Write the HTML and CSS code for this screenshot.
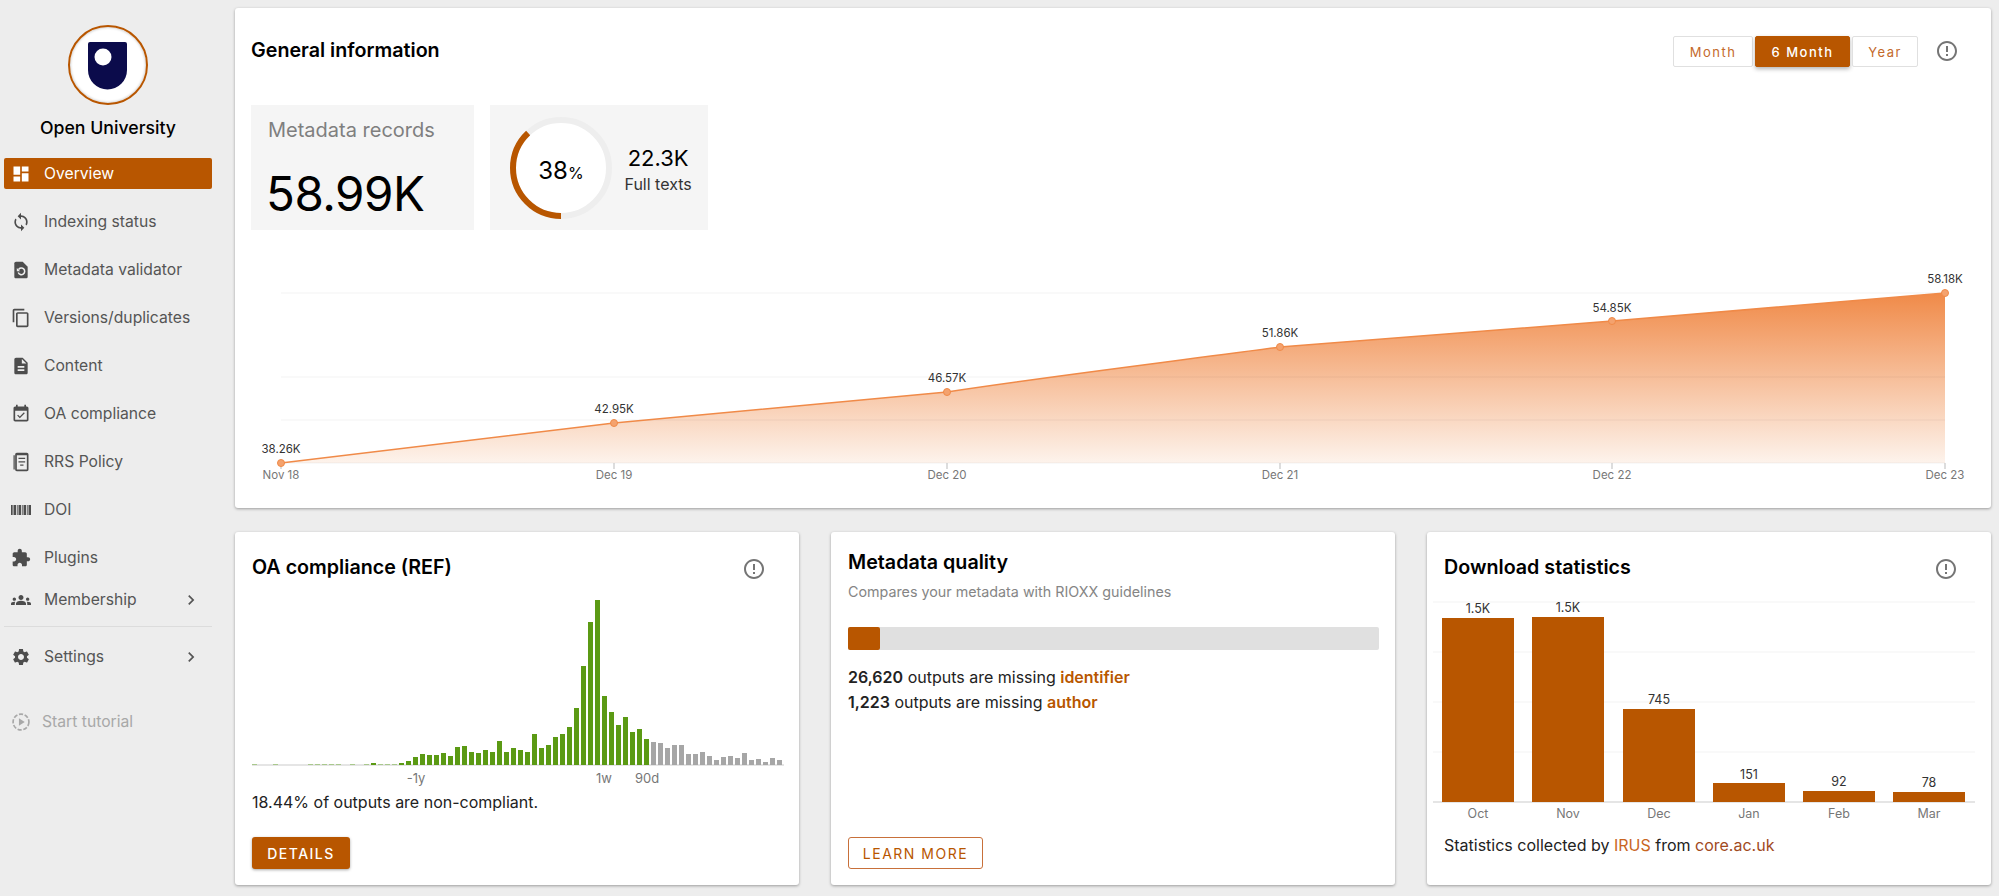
FILE: index.html
```html
<!DOCTYPE html>
<html lang="en">
<head>
<meta charset="utf-8">
<title>Open University - Overview</title>
<link rel="stylesheet" href="styles.css">
</head>
<body>
<div class="app">

  <aside class="sidebar">
    <div class="logo">
      <svg viewBox="0 0 76 76" width="76" height="76">
        <path class="logo-shield" d="M20 15h35a2 2 0 0 1 2 2v26a19.5 19.5 0 0 1-39 0V17a2 2 0 0 1 2-2z"/>
        <circle class="logo-dot" cx="33" cy="30" r="8.5"/>
      </svg>
    </div>
    <div class="org-name">Open University</div>

    <nav class="nav">
      <a class="nav-item active">
        <svg class="icon" viewBox="0 0 24 24"><path d="M3 13h8V3H3v10zm0 8h8v-6H3v6zm10 0h8V11h-8v10zm0-18v6h8V3h-8z"/></svg>
        Overview
      </a>
      <a class="nav-item">
        <svg class="icon" viewBox="0 0 24 24"><path d="M12 4V1L8 5l4 4V6c3.31 0 6 2.69 6 6 0 1.01-.25 1.97-.7 2.8l1.46 1.46C19.54 15.03 20 13.57 20 12c0-4.42-3.58-8-8-8zm0 14c-3.31 0-6-2.69-6-6 0-1.01.25-1.97.7-2.8L5.24 7.74C4.46 8.97 4 10.43 4 12c0 4.42 3.58 8 8 8v3l4-4-4-4v3z"/></svg>
        Indexing status
      </a>
      <a class="nav-item">
        <svg class="icon" viewBox="0 0 24 24"><path d="M14 2H6c-1.1 0-2 .9-2 2v16c0 1.1.9 2 2 2h12c1.1 0 2-.9 2-2V8l-6-6z"/><path class="icon-cut" d="M9 11.5a4 4 0 1 1-.3 3.5"/><path class="icon-cut-fill" d="M7 9.5v4h4z"/></svg>
        Metadata validator
      </a>
      <a class="nav-item">
        <svg class="icon" viewBox="0 0 24 24"><path d="M16 1H4c-1.1 0-2 .9-2 2v14h2V3h12V1zm3 4H8c-1.1 0-2 .9-2 2v14c0 1.1.9 2 2 2h11c1.1 0 2-.9 2-2V7c0-1.1-.9-2-2-2zm0 16H8V7h11v14z"/></svg>
        Versions/duplicates
      </a>
      <a class="nav-item">
        <svg class="icon" viewBox="0 0 24 24"><path d="M14 2H6c-1.1 0-1.99.9-1.99 2L4 20c0 1.1.89 2 1.99 2H18c1.1 0 2-.9 2-2V8l-6-6zm2 16H8v-2h8v2zm0-4H8v-2h8v2zm-3-5V3.5L18.5 9H13z"/></svg>
        Content
      </a>
      <a class="nav-item">
        <svg class="icon" viewBox="0 0 24 24"><path d="M16.53 11.06L15.47 10l-4.88 4.88-2.12-2.12-1.06 1.06L10.59 17l5.94-5.94zM19 3h-1V1h-2v2H8V1H6v2H5c-1.11 0-1.99.9-1.99 2L3 19c0 1.1.89 2 2 2h14c1.1 0 2-.9 2-2V5c0-1.1-.9-2-2-2zm0 16H5V8h14v11z"/></svg>
        OA compliance
      </a>
      <a class="nav-item">
        <svg class="icon" viewBox="0 0 24 24"><path d="M7 1h12c1.1 0 2 .9 2 2v18c0 1.1-.9 2-2 2H7c-1.1 0-2-.9-2-2V3c0-1.1.9-2 2-2zm0 3v17h12V4H7z"/><path d="M3 4h1.5v17H3zM9 7h8v1.5H9zm0 4h8v1.5H9zm2 4h4v1.5h-4z"/></svg>
        RRS Policy
      </a>
      <a class="nav-item">
        <svg class="icon" viewBox="0 0 24 24"><path d="M0 6h2v12H0zm3 0h3v12H3zm4 0h1v12H7zm2 0h3v12H9zm4 0h1v12h-1zm2 0h3v12h-3zm4 0h1v12h-1zm2 0h3v12h-3z"/></svg>
        DOI
      </a>
      <a class="nav-item">
        <svg class="icon" viewBox="0 0 24 24"><path d="M20.5 11H19V7c0-1.1-.9-2-2-2h-4V3.5C13 2.12 11.88 1 10.5 1S8 2.12 8 3.5V5H4c-1.1 0-1.99.9-1.99 2v3.8H3.5c1.49 0 2.7 1.21 2.7 2.7s-1.21 2.7-2.7 2.7H2V20c0 1.1.9 2 2 2h3.8v-1.5c0-1.49 1.21-2.7 2.7-2.7 1.49 0 2.7 1.21 2.7 2.7V22H17c1.1 0 2-.9 2-2v-4h1.5c1.38 0 2.5-1.12 2.5-2.5S21.88 11 20.5 11z"/></svg>
        Plugins
      </a>
      <a class="nav-item nav-membership">
        <svg class="icon" viewBox="0 0 24 24"><path d="M12 12.75c1.63 0 3.07.39 4.24.9 1.08.48 1.76 1.56 1.76 2.73V18H6v-1.61c0-1.18.68-2.26 1.76-2.73 1.17-.52 2.61-.91 4.24-.91zM4 13c1.1 0 2-.9 2-2s-.9-2-2-2-2 .9-2 2 .9 2 2 2zm1.13 1.1c-.37-.06-.74-.1-1.13-.1-.99 0-1.93.21-2.78.58C.48 14.9 0 15.62 0 16.43V18h4.5v-1.61c0-.83.23-1.61.63-2.29zM20 13c1.1 0 2-.9 2-2s-.9-2-2-2-2 .9-2 2 .9 2 2 2zm4 3.43c0-.81-.48-1.53-1.22-1.85-.85-.37-1.79-.58-2.78-.58-.39 0-.76.04-1.13.1.4.68.63 1.46.63 2.29V18H24v-1.57zM12 6c1.66 0 3 1.34 3 3s-1.34 3-3 3-3-1.34-3-3 1.34-3 3-3z"/></svg>
        Membership
        <svg class="icon chevron" viewBox="0 0 24 24"><path d="M10 6L8.59 7.41 13.17 12l-4.58 4.59L10 18l6-6z"/></svg>
      </a>
      <div class="nav-divider"></div>
      <a class="nav-item nav-settings">
        <svg class="icon" viewBox="0 0 24 24"><path d="M19.14 12.94c.04-.3.06-.61.06-.94 0-.32-.02-.64-.07-.94l2.03-1.58c.18-.14.23-.41.12-.61l-1.92-3.32c-.12-.22-.37-.29-.59-.22l-2.39.96c-.5-.38-1.03-.7-1.62-.94l-.36-2.54c-.04-.24-.24-.41-.48-.41h-3.84c-.24 0-.43.17-.47.41l-.36 2.54c-.59.24-1.13.57-1.62.94l-2.39-.96c-.22-.08-.47 0-.59.22L2.74 8.87c-.12.21-.08.47.12.61l2.03 1.58c-.05.3-.09.63-.09.94s.02.64.07.94l-2.03 1.58c-.18.14-.23.41-.12.61l1.92 3.32c.12.22.37.29.59.22l2.39-.96c.5.38 1.03.7 1.62.94l.36 2.54c.05.24.24.41.48.41h3.84c.24 0 .44-.17.47-.41l.36-2.54c.59-.24 1.13-.56 1.62-.94l2.39.96c.22.08.47 0 .59-.22l1.92-3.32c.12-.22.07-.47-.12-.61l-2.01-1.58zM12 15.6c-1.98 0-3.6-1.62-3.6-3.6s1.62-3.6 3.6-3.6 3.6 1.62 3.6 3.6-1.62 3.6-3.6 3.6z"/></svg>
        Settings
        <svg class="icon chevron" viewBox="0 0 24 24"><path d="M10 6L8.59 7.41 13.17 12l-4.58 4.59L10 18l6-6z"/></svg>
      </a>
      <a class="nav-item nav-tutorial">
        <svg class="icon" viewBox="0 0 24 24"><circle class="icon-dashed" cx="12" cy="12" r="9.5"/><path d="M9.5 7.5l7 4.500-7 4.500z"/></svg>
        Start tutorial
      </a>
    </nav>
  </aside>

  <main class="main">

    <section class="card card-general">
      <div class="general-head">
        <h2 class="card-title">General information</h2>
        <div class="period">
          <button class="period-btn btn-month">Month</button>
          <button class="period-btn btn-six active">6 Month</button>
          <button class="period-btn btn-year">Year</button>
        </div>
        <svg class="info" viewBox="0 0 24 24"><path d="M11 15h2v2h-2zm0-8h2v6h-2zm.99-5C6.47 2 2 6.48 2 12s4.47 10 9.99 10C17.52 22 22 17.52 22 12S17.52 2 11.99 2zM12 20c-4.42 0-8-3.58-8-8s3.58-8 8-8 8 3.58 8 8-3.58 8-8 8z"/></svg>
      </div>

      <div class="tiles">
        <div class="tile tile-records">
          <div class="tile-label">Metadata records</div>
          <div class="tile-value">58.99K</div>
        </div>
        <div class="tile tile-fulltext">
          <svg class="donut" viewBox="0 0 102 102" width="102" height="102">
            <circle class="donut-track" cx="51" cy="51" r="48"/>
            <circle class="donut-value" cx="51" cy="51" r="48" pathLength="100" transform="rotate(90 51 51)"/>
            <text class="donut-text" x="51" y="62" text-anchor="middle">38<tspan class="donut-pct">%</tspan></text>
          </svg>
          <div class="fulltext-info">
            <div class="fulltext-value">22.3K</div>
            <div class="fulltext-label">Full texts</div>
          </div>
        </div>
      </div>

      <!-- viewBox uses page coordinates so the points are easy to read off -->
      <svg class="area-chart" viewBox="235 230 1756 278">
        <defs>
          <linearGradient id="areaFill" x1="0" y1="0" x2="0" y2="1">
            <stop offset="0" stop-color="#f08a48"/>
            <stop offset="1" stop-color="#fdf3ec"/>
          </linearGradient>
        </defs>
        <path class="area" d="M281 463L614 423L947 392C1060 375 1170 362 1280 347L1612 321L1945 293V463z"/>
        <path class="grid" d="M281 293H1945M281 377H1945M281 420H1945M281 463H1945"/>
        <path class="tick" d="M281 463v6M614 463v6M947 463v6M1280 463v6M1612 463v6M1945 463v6"/>
        <path class="line" d="M281 463L614 423L947 392C1060 375 1170 362 1280 347L1612 321L1945 293"/>
        <g class="dots">
          <circle cx="281" cy="463" r="3.5"/>
          <circle cx="614" cy="423" r="3.5"/>
          <circle cx="947" cy="392" r="3.5"/>
          <circle cx="1280" cy="347" r="3.5"/>
          <circle cx="1612" cy="321" r="3.5"/>
          <circle cx="1945" cy="293" r="3.5"/>
        </g>
        <g class="point-label">
          <text x="281" y="453">38.26K</text>
          <text x="614" y="413">42.95K</text>
          <text x="947" y="382">46.57K</text>
          <text x="1280" y="337">51.86K</text>
          <text x="1612" y="312">54.85K</text>
          <text x="1945" y="283">58.18K</text>
        </g>
        <g class="axis-label">
          <text x="281" y="479">Nov 18</text>
          <text x="614" y="479">Dec 19</text>
          <text x="947" y="479">Dec 20</text>
          <text x="1280" y="479">Dec 21</text>
          <text x="1612" y="479">Dec 22</text>
          <text x="1945" y="479">Dec 23</text>
        </g>
      </svg>
    </section>

    <div class="cards">

      <section class="card card-small">
        <div class="small-head">
          <h2 class="card-title">OA compliance (REF)</h2>
          <svg class="info" viewBox="0 0 24 24"><path d="M11 15h2v2h-2zm0-8h2v6h-2zm.99-5C6.47 2 2 6.48 2 12s4.47 10 9.99 10C17.52 22 22 17.52 22 12S17.52 2 11.99 2zM12 20c-4.42 0-8-3.58-8-8s3.58-8 8-8 8 3.58 8 8-3.58 8-8 8z"/></svg>
        </div>
        <svg class="oa-chart" viewBox="252 585 532 204">
          <path class="oa-base" d="M252 763H784"/>
          <path class="oa-tiny" d="M252 763v-1h5v1zM273 763v-1h5v1zM308 763v-1h5v1zM315 763v-1h5v1zM322 763v-1h5v1zM329 763v-1h5v1zM336 763v-1h5v1zM350 763v-1h5v1zM364 763v-1h5v1zM378 763v-1h5v1zM385 763v-1h5v1zM392 763v-1h5v1z"/>
          <path class="oa-green" d="M371 763v-2h5v2zM399 763v-2h5v2zM406 763v-4h5v4zM413 763v-8h5v8zM420 763v-11h5v11zM427 763v-10h5v10zM434 763v-10h5v10zM441 763v-12h5v12zM448 763v-9h5v9zM455 763v-18h5v18zM462 763v-19h5v19zM469 763v-13h5v13zM476 763v-12h5v12zM483 763v-15h5v15zM490 763v-13h5v13zM497 763v-24h5v24zM504 763v-13h5v13zM511 763v-17h5v17zM518 763v-15h5v15zM525 763v-13h5v13zM532 763v-31h5v31zM539 763v-17h5v17zM546 763v-20h5v20zM553 763v-28h5v28zM560 763v-31h5v31zM567 763v-38h5v38zM574 763v-57h5v57zM581 763v-99h5v99zM588 763v-143h5v143zM595 763v-165h5v165zM602 763v-69h5v69zM609 763v-53h5v53zM616 763v-40h5v40zM623 763v-48h5v48zM630 763v-33h5v33zM637 763v-36h5v36zM644 763v-26h5v26z"/>
          <path class="oa-gray" d="M651 763v-23h5v23zM658 763v-22h5v22zM665 763v-17h5v17zM672 763v-20h5v20zM679 763v-20h5v20zM686 763v-11h5v11zM693 763v-11h5v11zM700 763v-13h5v13zM707 763v-9h5v9zM714 763v-5h5v5zM721 763v-8h5v8zM728 763v-9h5v9zM735 763v-7h5v7zM742 763v-12h5v12zM749 763v-5h5v5zM756 763v-6h5v6zM763 763v-3h5v3zM770 763v-7h5v7zM777 763v-5h5v5z"/>
          <g class="axis-label oa-label">
            <text x="416" y="781">-1y</text>
            <text x="604" y="781">1w</text>
            <text x="647" y="781">90d</text>
          </g>
        </svg>
        <p class="card-text">18.44% of outputs are non-compliant.</p>
        <a class="btn btn-solid">DETAILS</a>
      </section>

      <section class="card card-small">
        <h2 class="card-title quality-title">Metadata quality</h2>
        <p class="card-sub">Compares your metadata with RIOXX guidelines</p>
        <div class="progress"><div class="progress-bar" style="width:6%"></div></div>
        <div class="missing">
          <div><b>26,620</b> outputs are missing <b class="accent">identifier</b></div>
          <div><b>1,223</b> outputs are missing <b class="accent">author</b></div>
        </div>
        <a class="btn btn-outline">LEARN MORE</a>
      </section>

      <section class="card card-small">
        <div class="small-head">
          <h2 class="card-title">Download statistics</h2>
          <svg class="info" viewBox="0 0 24 24"><path d="M11 15h2v2h-2zm0-8h2v6h-2zm.99-5C6.47 2 2 6.48 2 12s4.47 10 9.99 10C17.52 22 22 17.52 22 12S17.52 2 11.99 2zM12 20c-4.42 0-8-3.58-8-8s3.58-8 8-8 8 3.58 8 8-3.58 8-8 8z"/></svg>
        </div>
        <svg class="dl-chart" viewBox="1427 590 564 234">
          <path class="grid" d="M1433 602H1975M1433 652H1975M1433 702H1975M1433 752H1975"/>
          <path class="dl-base" d="M1433 802H1975"/>
          <rect class="dl-bar" x="1442" y="618" width="72" height="184"/>
          <rect class="dl-bar" x="1532" y="617" width="72" height="185"/>
          <rect class="dl-bar" x="1623" y="709" width="72" height="93"/>
          <rect class="dl-bar" x="1713" y="783" width="72" height="19"/>
          <rect class="dl-bar" x="1803" y="791" width="72" height="11"/>
          <rect class="dl-bar" x="1893" y="792" width="72" height="10"/>
          <g class="point-label dl-value">
            <text x="1478" y="613">1.5K</text>
            <text x="1568" y="612">1.5K</text>
            <text x="1659" y="704">745</text>
            <text x="1749" y="779">151</text>
            <text x="1839" y="786">92</text>
            <text x="1929" y="787">78</text>
          </g>
          <g class="axis-label dl-month">
            <text x="1478" y="818">Oct</text>
            <text x="1568" y="818">Nov</text>
            <text x="1659" y="818">Dec</text>
            <text x="1749" y="818">Jan</text>
            <text x="1839" y="818">Feb</text>
            <text x="1929" y="818">Mar</text>
          </g>
        </svg>
        <p class="card-text dl-note">Statistics collected by <a class="link-irus">IRUS</a> from <a class="link-core">core.ac.uk</a></p>
      </section>

    </div>
  </main>
</div>
</body>
</html>
```

FILE: styles.css
```css
* {
  box-sizing: border-box;
}
body {
  margin: 0;
  background: #ededed;
  color: #000;
  font-family: Inter, "Liberation Sans", sans-serif;
}
h2, p {
  margin: 0;
}
.app {
  display: flex;
  width: 1999px;
  height: 896px;
  overflow: hidden;
}

/* sidebar */
.sidebar {
  width: 235px;
  flex: none;
  padding-top: 25px;
}
.logo {
  width: 80px;
  height: 80px;
  margin-left: 68px;
  border: 2px solid #b85600;
  border-radius: 50%;
  background: #fff;
  box-shadow: inset 0 0 3px rgba(0,0,0,.3);
}
.logo svg {
  display: block;
}
.logo-shield {
  fill: #0b0b4b;
}
.logo-dot {
  fill: #fff;
}
.org-name {
  width: 216px;
  margin-top: 11px;
  font-size: 17.7px;
  font-weight: 500;
  line-height: 24px;
  text-align: center;
}
.nav {
  display: flex;
  flex-direction: column;
  gap: 17px;
  width: 208px;
  margin: 18px 0 0 4px;
}
.nav-item {
  display: flex;
  align-items: center;
  gap: 13px;
  height: 31px;
  padding-left: 7px;
  border-radius: 2px;
  color: #555;
  font-size: 15.7px;
}
.nav-item.active {
  background: #b85600;
  color: #fff;
}
.nav-membership {
  margin-top: -6px;
}
.nav-divider {
  height: 1px;
  margin: -6px 0 -3px;
  background: #dcdcdc;
}
.nav-tutorial {
  margin-top: 17px;
  gap: 11px;
  color: #a8a8a8;
}
.icon {
  width: 20px;
  height: 20px;
  flex: none;
  fill: #4d4d4d;
}
.active .icon {
  fill: #fff;
}
.icon-cut {
  fill: none;
  stroke: #ededed;
  stroke-width: 1.8;
}
.icon-cut-fill {
  fill: #ededed;
}
.icon-dashed {
  fill: none;
  stroke: #a8a8a8;
  stroke-width: 2;
  stroke-dasharray: 5 2;
}
.nav-tutorial .icon {
  fill: #a8a8a8;
}
.chevron {
  margin-left: auto;
  margin-right: 11px;
  fill: #555;
}

/* main area */
.main {
  flex: none;
  width: 1756px;
  padding-top: 8px;
}
.card {
  border-radius: 3px;
  background: #fff;
  box-shadow: 0 1px 3px rgba(0,0,0,.35);
}
.card-title {
  font-size: 19.7px;
  font-weight: 600;
  line-height: 26px;
}
.info {
  width: 24px;
  height: 24px;
  flex: none;
  fill: #757575;
}

.card-general {
  height: 500px;
}
.general-head {
  display: flex;
  align-items: flex-start;
  padding: 28px 32px 0 16px;
}
.general-head .card-title {
  margin-top: 1px;
}
.period {
  display: flex;
  gap: 2px;
  margin-left: auto;
}
.period-btn {
  height: 31px;
  padding: 0;
  border: 1px solid #e0e0e0;
  border-radius: 2px;
  background: #fff;
  color: #c46a2c;
  font-family: inherit;
  font-size: 13px;
  letter-spacing: 1.5px;
}
.btn-month {
  width: 80px;
}
.btn-six {
  width: 95px;
}
.btn-year {
  width: 66px;
}
.period-btn.active {
  border-color: #b85600;
  background: #b85600;
  color: #fff;
  font-weight: 500;
  box-shadow: 0 2px 4px rgba(0,0,0,.3);
}
.general-head .info {
  margin: 3px 0 0 17px;
}

.tiles {
  display: flex;
  gap: 16px;
  margin: 38px 0 0 16px;
}
.tile {
  height: 125px;
  background: #f5f5f5;
}
.tile-records {
  width: 223px;
  padding: 13px 17px;
}
.tile-label {
  color: #7f7f7f;
  font-size: 20px;
  line-height: 24px;
}
.tile-value {
  margin: 22px 0 0 -2px;
  font-size: 47.5px;
  line-height: 60px;
  letter-spacing: -.5px;
}
.tile-fulltext {
  display: flex;
  align-items: center;
  gap: 12.5px;
  width: 218px;
  padding-left: 20px;
}
.donut {
  flex: none;
}
.donut-track {
  fill: #fff;
  stroke: #eee;
  stroke-width: 6;
}
.donut-value {
  fill: none;
  stroke: #b85600;
  stroke-width: 6;
  stroke-dasharray: 38 100;
}
.donut-text {
  font-size: 24px;
}
.donut-pct {
  font-size: 16px;
}
.fulltext-info {
  padding-top: 4px;
  text-align: center;
}
.fulltext-value {
  font-size: 22px;
  line-height: 30px;
}
.fulltext-label {
  color: #333;
  font-size: 16px;
  line-height: 23px;
}

.area-chart {
  display: block;
  width: 1756px;
  height: 278px;
}
.area {
  fill: url(#areaFill);
}
.grid {
  fill: none;
  stroke: #000;
  stroke-opacity: .05;
}
.tick {
  fill: none;
  stroke: #bbb;
}
.line {
  fill: none;
  stroke: #f08a48;
  stroke-width: 1.5;
}
.dots circle {
  fill: #f4a26e;
  stroke: #f08a48;
}
.point-label text {
  fill: #333;
  font-size: 11.5px;
  text-anchor: middle;
}
.axis-label text {
  fill: #777;
  font-size: 11.5px;
  text-anchor: middle;
}

/* bottom row */
.cards {
  display: grid;
  grid-template-columns: repeat(3, minmax(0, 1fr));
  gap: 32px;
  margin-top: 24px;
}
.card-small {
  display: flex;
  flex-direction: column;
  height: 353px;
  padding: 0 16px 16px 17px;
}
.small-head {
  display: flex;
  align-items: flex-start;
  justify-content: space-between;
  padding: 21.5px 17px 0 0;
}
.small-head .info {
  margin-top: 3.5px;
}
.oa-chart {
  display: block;
  flex: none;
  width: 532px;
  height: 204px;
  margin-top: 5.5px;
}
.oa-base {
  fill: none;
  stroke: #ddd;
  stroke-width: 1.5;
}
.oa-tiny {
  fill: #a9c98d;
}
.oa-green {
  fill: #5b9a14;
}
.oa-gray {
  fill: #a6a6a6;
}
.oa-label text {
  font-size: 13px;
}
.card-text {
  color: #222;
  font-size: 16px;
  line-height: 22px;
}
.btn {
  display: flex;
  align-items: center;
  justify-content: center;
  height: 32px;
  margin-top: auto;
  border-radius: 3px;
  font-size: 14px;
  letter-spacing: 1.5px;
}
.btn-solid {
  width: 98px;
  background: #b85600;
  color: #fff;
  font-weight: 500;
  box-shadow: 0 1px 3px rgba(0,0,0,.35);
}
.btn-outline {
  width: 135px;
  border: 1.5px solid #c8703a;
  color: #b85600;
}

.quality-title {
  margin-top: 16.5px;
}
.card-sub {
  margin-top: 7.5px;
  color: #858585;
  font-size: 14.3px;
  line-height: 20px;
}
.progress {
  height: 23px;
  margin-top: 25px;
  border-radius: 2px;
  background: #e0e0e0;
}
.progress-bar {
  height: 100%;
  border-radius: 2px;
  background: #b85600;
}
.missing {
  margin-top: 15px;
  color: #222;
  font-size: 16px;
  line-height: 25px;
}
.missing b {
  font-weight: 600;
}
.missing .accent {
  color: #b85600;
}

.dl-chart {
  display: block;
  flex: none;
  width: 564px;
  height: 234px;
  margin: 9px 0 0 -17px;
}
.dl-base {
  fill: none;
  stroke: #ddd;
  stroke-width: 1.5;
}
.dl-bar {
  fill: #b85600;
}
.dl-value text,
.dl-month text {
  font-size: 12.5px;
}
.dl-note {
  margin-top: 10px;
}
.link-irus {
  color: #c9651f;
}
.link-core {
  color: #a14a1e;
}
```
